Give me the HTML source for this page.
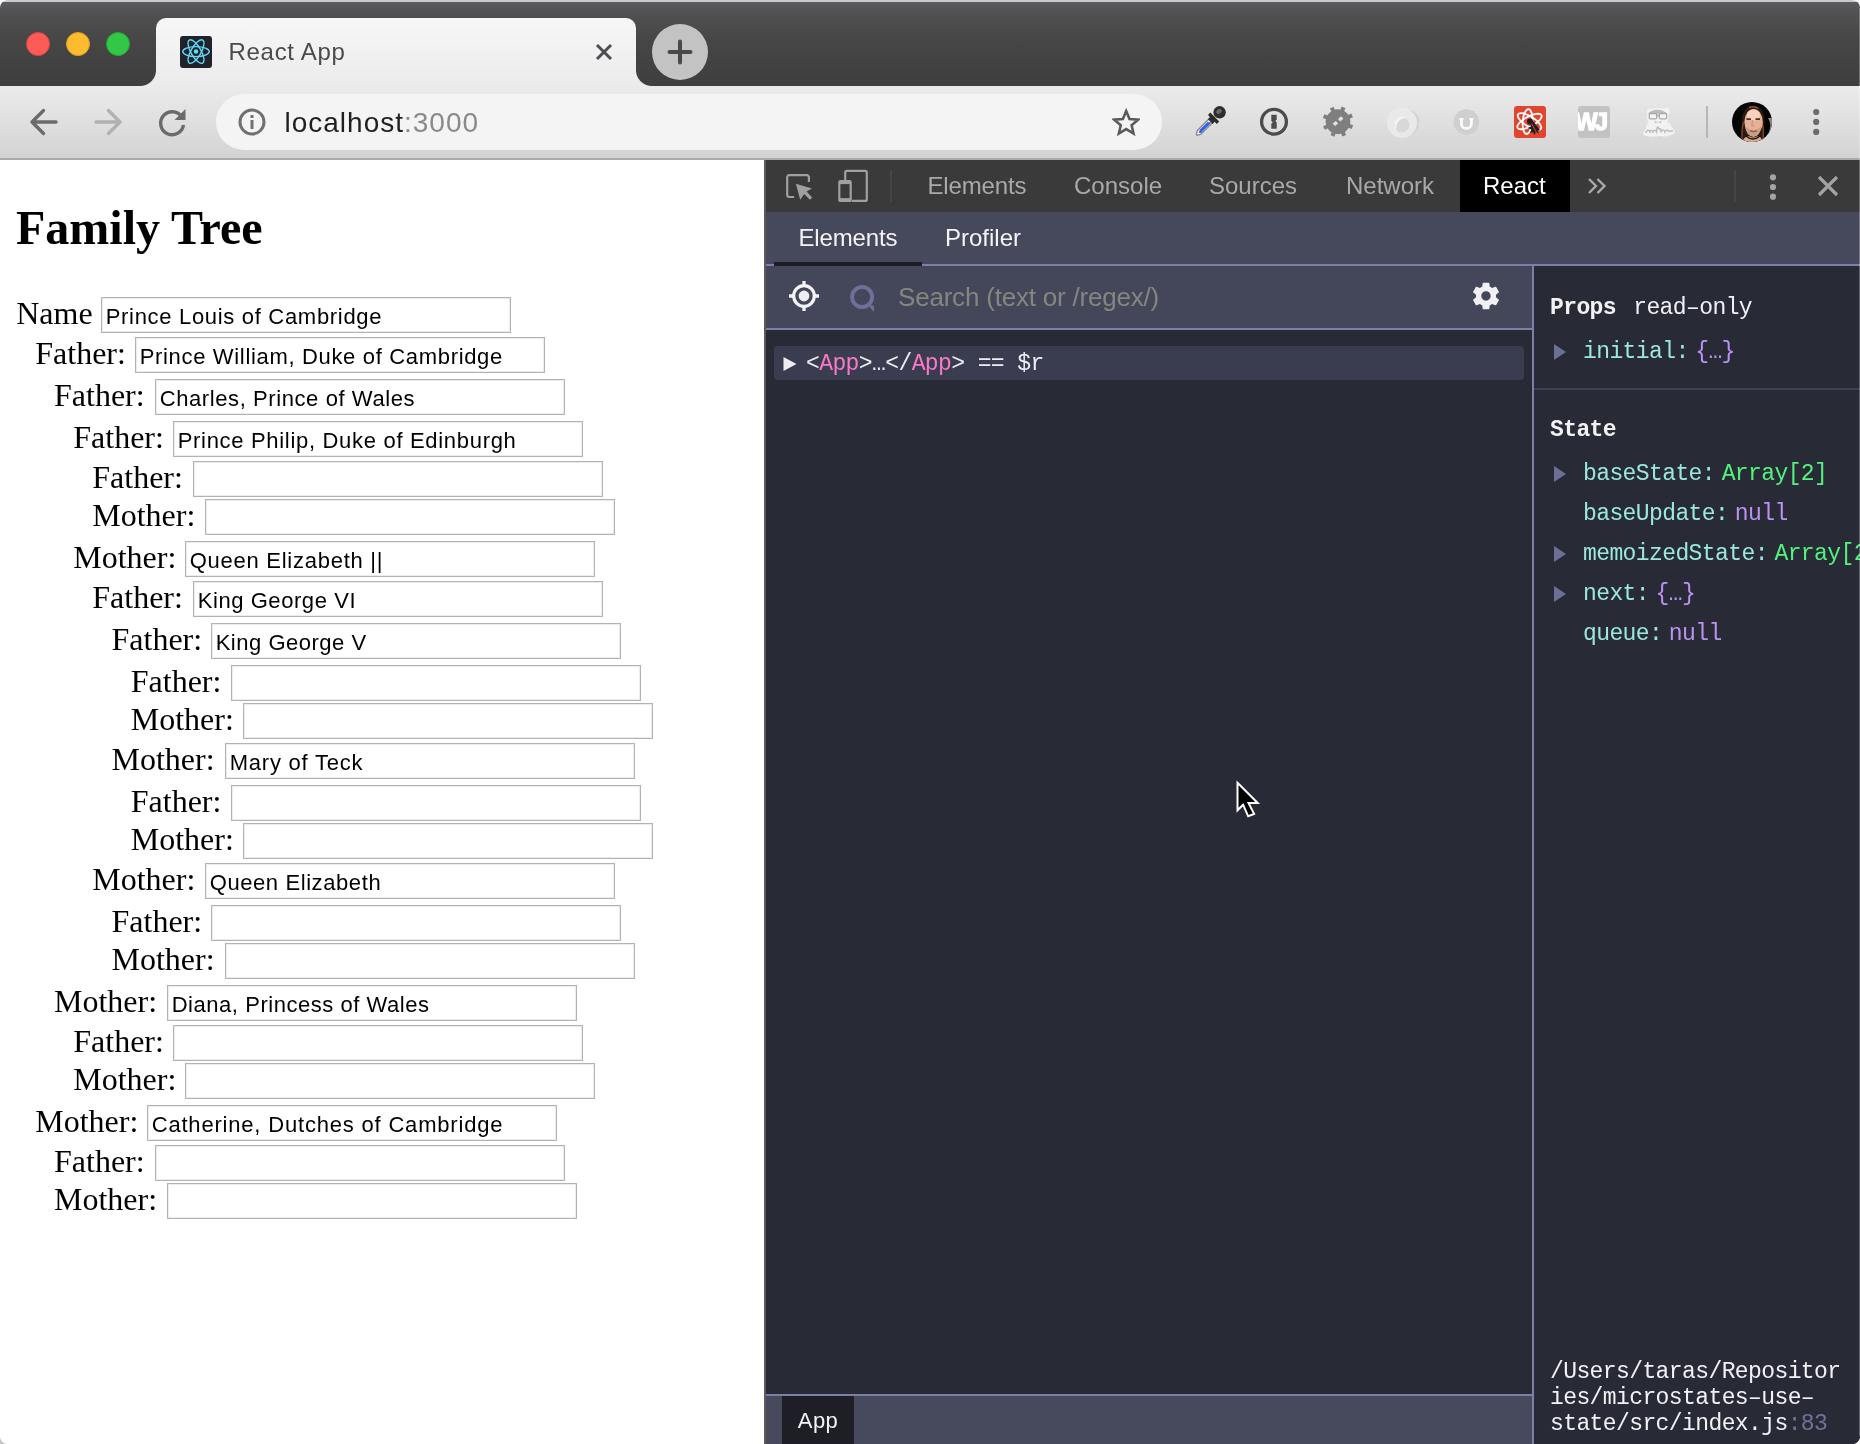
<!DOCTYPE html>
<html><head><meta charset="utf-8"><title>React App</title>
<style>
*{box-sizing:border-box;margin:0;padding:0}
html,body{width:1860px;height:1444px;overflow:hidden;background:#fff}
body{font-family:"Liberation Sans",sans-serif;position:relative}
#win{position:absolute;left:0;top:0;width:1860px;height:1444px;overflow:hidden;border-radius:8px;background:#fff;will-change:transform}
.abs{position:absolute}
/* ---------- title bar ---------- */
#tb{position:absolute;left:0;top:0;width:1860px;height:86px;background:linear-gradient(#c9c9c9 0,#c9c9c9 1.5px,#5b5b5e 2.5px,#515153 12px,#464646 40px,#3e3e3e 86px)}
.tl{position:absolute;top:32px;width:24px;height:24px;border-radius:50%}
#tab{position:absolute;left:156px;top:18px;width:480px;height:68px;border-radius:10px 10px 0 0;background:linear-gradient(#f7f7f7,#ebebeb)}
#tab:before,#tab:after{content:"";position:absolute;bottom:0;width:16px;height:16px}
#tab:before{left:-16px;background:radial-gradient(circle at 0 0,rgba(0,0,0,0) 15.5px,#ebebeb 16.5px)}
#tab:after{right:-16px;background:radial-gradient(circle at 100% 0,rgba(0,0,0,0) 15.5px,#ebebeb 16.5px)}
#tabtitle{position:absolute;left:72.5px;top:20px;font-size:24px;line-height:28px;color:#4a4a4a;letter-spacing:.7px;white-space:nowrap}
#newtab{position:absolute;left:652px;top:24px;width:56px;height:56px;border-radius:50%;background:#c3c3c3}
/* ---------- toolbar ---------- */
#bar{position:absolute;left:0;top:86px;width:1860px;height:74px;background:linear-gradient(#ebebeb 0,#e4e4e4 30%,#d6d6d6 85%,#d2d2d2 97%,#a9a9a9 98%,#a9a9a9 100%)}
#url{position:absolute;left:216px;top:8px;width:946px;height:56px;border-radius:28px;background:#f4f4f4}
#urltext{position:absolute;left:68.5px;top:11px;font-size:28px;line-height:36px;color:#1f1f1f;letter-spacing:1px;white-space:nowrap}
#urltext i{font-style:normal;color:#8a8a8a}
/* ---------- page ---------- */
#page{position:absolute;left:0;top:160px;width:764px;height:1284px;background:#fff;font-family:"Liberation Serif",serif;color:#000}
.h1{position:absolute;left:16px;top:40px;font-size:48px;font-weight:bold;line-height:56px;white-space:nowrap}
.lab{position:absolute;font-size:32px;line-height:40px;white-space:nowrap;margin-top:-160px}
.inp{position:absolute;width:410px;height:36px;border:1px solid #b3b3b3;box-shadow:inset 0 0 0 1px #ececec;background:#fff;margin-top:-160px;font-family:"Liberation Sans",sans-serif;font-size:22px;line-height:34px;white-space:nowrap;overflow:hidden}
.inp span{position:absolute;left:3.7px;top:2px;letter-spacing:.68px}
/* ---------- devtools ---------- */
#dev{position:absolute;left:764px;top:160px;width:1096px;height:1284px;background:#282a36;border-left:2px solid #5b5b5b}
#dtabs{position:absolute;left:0;top:0;width:1094px;height:52px;background:#3a3a3a;font-size:24px;color:#a9a9a9}
#dtabs span{position:absolute;top:12px;line-height:28px;white-space:nowrap}
#rtab{position:absolute;left:694px;top:0;width:110px;height:52px;background:#000}
#rbar{position:absolute;left:0;top:52px;width:1094px;height:54px;background:#46485b;border-bottom:2px solid #7c7fa9;font-size:24px;color:#f4f4f6}
#rbar span{position:absolute;top:12px;line-height:28px;white-space:nowrap}
#rsel{position:absolute;left:8px;top:50px;width:148px;height:4px;background:#1c1d26}
#sbar{position:absolute;left:0;top:106px;width:766px;height:64px;background:#44475a;border-bottom:2px solid #7c7fa9}
#sph{position:absolute;left:132px;top:16px;font-size:26px;line-height:30px;color:#85867f;white-space:nowrap;letter-spacing:-.2px}
#tree{position:absolute;left:0;top:170px;width:766px;height:1064px;background:#282a36}
#selrow{position:absolute;left:8px;top:16px;width:750px;height:34px;border-radius:4px;background:#3a3c50}
.mono{font-family:"Liberation Mono",monospace;font-size:23px;letter-spacing:-.6px;white-space:nowrap}
#rowtxt{position:absolute;left:32px;top:5px;line-height:26px;color:#eeeef2}
#rowtxt b{font-weight:normal;color:#f979c6}
#crumbs{position:absolute;left:0;top:1234px;width:766px;height:50px;background:#474a5c;border-top:2px solid #7c7fa9}
#chip{position:absolute;left:16px;top:0;width:72px;height:48px;background:#1d1e26;color:#f4f4f6;font-size:22px;line-height:50px;text-align:center;letter-spacing:.4px}
#side{position:absolute;left:766px;top:106px;width:328px;height:1178px;background:#282a36;border-left:2px solid #7c7fa9;color:#f2f2f5}
.sl{position:absolute;left:16px;line-height:26px}
.k{color:#9ae8de}.p{color:#bb92f2}.g{color:#52f47e}.c{color:#6f7396}
.tri{position:absolute;left:20px;width:0;height:0;border-left:12px solid #6c7096;border-top:8px solid transparent;border-bottom:8px solid transparent}
#sep{position:absolute;left:0;top:122px;width:326px;height:2px;background:#3f4152}
#redge{position:absolute;left:1859px;top:8px;width:1px;height:1428px;background:rgba(255,255,255,.28)}
#cbl{position:absolute;left:0;top:1434px;width:10px;height:10px;background:#c4c4c4}

</style></head>
<body>
<div id="cbl"></div>
<div id="win">
<div id="tb">
 <div class="tl" style="left:26px;background:#fc5b57;border:1px solid #df4640"></div>
 <div class="tl" style="left:66px;background:#fdbc2e;border:1px solid #de9f24"></div>
 <div class="tl" style="left:106px;background:#33c748;border:1px solid #24a834"></div>
 <div id="tab">
  <svg class="abs" style="left:24px;top:18px" width="32" height="32" viewBox="0 0 32 32">
   <rect width="32" height="32" rx="3" fill="#20232a"/>
   <g fill="none" stroke="#61dafb" stroke-width="1.350">
    <ellipse cx="16" cy="15.600" rx="13.300" ry="5"/>
    <ellipse cx="16" cy="15.600" rx="13.300" ry="5" transform="rotate(60 16 15.600)"/>
    <ellipse cx="16" cy="15.600" rx="13.300" ry="5" transform="rotate(120 16 15.600)"/>
   </g>
   <circle cx="16" cy="15.600" r="2.250" fill="#61dafb"/>
  </svg>
  <div id="tabtitle">React App</div>
  <svg class="abs" style="left:438px;top:24px" width="20" height="20" viewBox="0 0 20 20"><path d="M3 3 L17 17 M17 3 L3 17" stroke="#4b4e52" stroke-width="3" fill="none"/></svg>
 </div>
 <div id="newtab">
  <svg class="abs" style="left:14px;top:14px" width="28" height="28" viewBox="0 0 28 28"><path d="M14 3.5 V24.5 M3.5 14 H24.5" stroke="#4a4a4a" stroke-width="4" stroke-linecap="round" fill="none"/></svg>
 </div>
</div>
<div id="bar">
 <!-- back -->
 <svg class="abs" style="left:28px;top:20px" width="32" height="32" viewBox="0 0 32 32"><path d="M28 16 H5 M15.5 4.5 L4 16 L15.5 27.5" stroke="#6b6b6b" stroke-width="3.4" fill="none" stroke-linecap="round" stroke-linejoin="round"/></svg>
 <!-- forward -->
 <svg class="abs" style="left:92px;top:20px" width="32" height="32" viewBox="0 0 32 32"><path d="M4 16 H27 M16.5 4.5 L28 16 L16.5 27.5" stroke="#b1b1b1" stroke-width="3.4" fill="none" stroke-linecap="round" stroke-linejoin="round"/></svg>
 <!-- reload -->
 <svg class="abs" style="left:156px;top:20px" width="32" height="32" viewBox="0 0 32 32"><path d="M25.5 10.5 A11.5 11.5 0 1 0 27.5 19" stroke="#6b6b6b" stroke-width="3.4" fill="none"/><path d="M29.5 3 V14 H18.5 Z" fill="#6b6b6b"/></svg>
 <div id="url">
  <svg class="abs" style="left:22px;top:14px" width="28" height="28" viewBox="0 0 28 28"><circle cx="14" cy="14" r="12" fill="none" stroke="#707070" stroke-width="3"/><rect x="12.5" y="12" width="3" height="9" fill="#707070"/><rect x="12.5" y="7" width="3" height="3" fill="#707070"/></svg>
  <div id="urltext">localhost<i>:3000</i></div>
  <!-- star -->
  <svg class="abs" style="left:895.800px;top:14px" width="28.400" height="28.400" viewBox="0 0 30 30"><path d="M15 3.2 L18.5 11.6 L27.6 12.3 L20.7 18.2 L22.8 27 L15 22.3 L7.2 27 L9.3 18.2 L2.4 12.3 L11.5 11.6 Z" fill="none" stroke="#5a5a5a" stroke-width="2.700" stroke-linejoin="miter"/></svg>
 </div>
 <!-- eyedropper -->
 <svg class="abs" style="left:1194px;top:18px" width="34" height="34" viewBox="0 0 34 34">
  <path d="M2.200 30.300 L3.400 26.500 L17.800 12.100 L21.400 15.700 L7 30.100 L3.200 31.300 Z" fill="#f4f4f4" stroke="#8a8a8a" stroke-width="1.400" stroke-linejoin="round"/>
  <path d="M4.600 28.800 L6 25.600 L13.600 18 L17.400 18.600 L7 29 Z" fill="#2f63e6"/>
  <path d="M16.300 8.600 L25.200 17.500 L22.800 19.900 L20.700 17.800 L18.600 19.900 L14 15.300 L16.100 13.200 L14 11.100 Z" fill="#2b2b2b"/>
  <circle cx="25.600" cy="8.300" r="6.200" fill="#2e2e2e"/>
  <ellipse cx="25" cy="7.400" rx="3" ry="2.200" transform="rotate(-40 25 7.400)" fill="#6a6a6a"/>
 </svg>
 <!-- 1password -->
 <svg class="abs" style="left:1258px;top:20px" width="32" height="32" viewBox="0 0 32 32"><circle cx="16" cy="15.700" r="12.400" fill="none" stroke="#4c4c4c" stroke-width="3.300"/><path d="M13.300 8.700 H18.700 V13.700 L17.200 15 L18.700 16.300 V22.700 H13.300 V17.700 L14.800 16.400 L13.300 15.100 Z" fill="#4c4c4c"/></svg>
 <!-- bug gear -->
 <svg class="abs" style="left:1320px;top:18px" width="36" height="36" viewBox="0 0 36 36">
  <g transform="rotate(21 18 17.700)"><circle cx="18" cy="17.700" r="12.300" fill="#7f7f7f"/>
  <path d="M18 2.300 V33.100 M2.600 17.700 H33.400 M7.100 6.800 L28.900 28.600 M28.900 6.800 L7.100 28.600" stroke="#7f7f7f" stroke-width="4" fill="none"/></g>
  <path d="M12.700 19.600 L15.800 16.900 L18.100 19.400 L15 22.100 Z M18 14.900 L21.100 12.200 L23.400 14.700 L20.300 17.400 Z" fill="#e2e2e2"/>
 </svg>
 <!-- swirl -->
 <svg class="abs" style="left:1386px;top:20px" width="33" height="33" viewBox="0 0 33 33"><circle cx="16.300" cy="16.300" r="15.400" fill="#e9e9e9"/><path d="M24 4 A15.400 15.400 0 0 1 25 29 A13 13 0 0 0 24 4" fill="#d4d4d4"/><circle cx="15.800" cy="19" r="7.600" fill="#d8d8d8"/><path d="M8.500 19 A7.500 7.500 0 0 1 20 12 A10 10 0 0 0 10.500 25 A7.400 7.400 0 0 1 8.500 19" fill="#f4f4f4"/></svg>
 <!-- U -->
 <svg class="abs" style="left:1453px;top:23px" width="26" height="26" viewBox="0 0 26 26"><circle cx="13.400" cy="13" r="12.800" fill="#cfcfcf"/><path d="M8.400 9.300 V14.400 A5 5 0 0 0 18.400 14.400 V9.300" fill="none" stroke="#fbfbfb" stroke-width="2.800"/><path d="M6.200 9.800 H10.600 M16.200 9.800 H20.600" stroke="#fbfbfb" stroke-width="1.700"/></svg>
 <!-- react red -->
 <svg class="abs" style="left:1514px;top:20px" width="32" height="32" viewBox="0 0 32 32"><rect width="32" height="32" rx="3" fill="#e1452f"/>
  <g fill="none" stroke="#fff" stroke-width="1.800"><ellipse cx="15.500" cy="15.500" rx="13.500" ry="5" transform="rotate(-28 15.500 15.500)"/><ellipse cx="15.500" cy="15.500" rx="13.500" ry="5" transform="rotate(32 15.500 15.500)"/><ellipse cx="13.500" cy="15.500" rx="12.500" ry="4.800" transform="rotate(95 13.500 15.500)"/></g>
  <circle cx="16" cy="15.500" r="3" fill="#1d1d1d"/>
  <path d="M15.500 17 L19.500 15.500 L26 24 L23.500 25 L25 27.500 L21.800 26 L20.500 29 L19 26 L16 27 L17.500 23.500 L13.500 22 L17 20.500 Z" fill="#1d1d1d"/><path d="M17.500 17.500 L22.500 26.500" stroke="#e1452f" stroke-width="1"/></svg>
 <!-- WJ -->
 <div class="abs" style="left:1578px;top:20px;width:32px;height:32px;background:#c2c2c2;border-radius:3px;overflow:hidden"><div class="abs" style="left:-3px;top:2px;width:40px;color:#fff;font-weight:bold;font-size:24px;line-height:28px;letter-spacing:-2.800px;-webkit-text-stroke:1.300px #fff;white-space:nowrap">WJ</div></div>
 <!-- ember -->
 <svg class="abs" style="left:1641px;top:19px" width="36" height="34" viewBox="0 0 36 34">
  <path d="M6 5.500 Q7 2.500 10 4 Q16.500 1.800 23 4 Q27 0.500 28.500 5 Q29.500 8 27 10 Q28 14 26 17 Q30 18 30.500 22 Q34 24 33.500 28 Q28 32.500 18 31 Q8 33 2.500 30 Q1 26.500 5 24.500 Q4.500 20.500 7.500 17.500 Q5 13 6.500 9.500 Q5 8 6 5.500 Z" fill="#f2f2f2"/>
  <path d="M8 7.500 Q16.500 1.500 25 7.500 L26 9 L7 9 Z" fill="#bdbdbd"/>
  <g fill="#f4f4f4" stroke="#a9a9a9" stroke-width="1.300"><rect x="8.300" y="8.500" width="7.400" height="5.400" rx="1.500"/><rect x="18.300" y="8.500" width="7.400" height="5.400" rx="1.500"/></g>
  <path d="M15.700 10.500 H18.300" stroke="#a9a9a9" stroke-width="1.300"/>
  <path d="M13 15 Q17 19 21 15 L19.500 18.500 L17 17 L14.500 18.500 Z" fill="#c6c6c6"/>
  <path d="M4.500 28 Q7 23 9 27 Q10 23.500 12 27 Q13.500 23.500 15.500 27 Q16 19 18 24 Q21 23 19.500 27 Q23 23 24 27 Q26 23.500 28 26.500 L32 25.500" stroke="#bdbdbd" stroke-width="1.500" fill="none"/>
 </svg>
 <!-- separator -->
 <div class="abs" style="left:1706px;top:20px;width:2px;height:32px;background:#b7b7b7"></div>
 <!-- avatar -->
 <svg class="abs" style="left:1732px;top:16px" width="40" height="40" viewBox="0 0 40 40">
  <defs><clipPath id="avc"><circle cx="20" cy="20" r="20"/></clipPath></defs>
  <g clip-path="url(#avc)">
   <rect width="40" height="40" fill="#050505"/>
   <path d="M11 40 Q9 30 10.500 22 Q8 12 16 5 Q22 2 28 6 Q34 12 32 24 Q33 32 31 40 Z" fill="#2c190f"/>
   <path d="M10.500 40 Q9 28 11.500 20 M30.500 40 Q32.500 30 30 20" stroke="#7b4a2c" stroke-width="1.400" fill="none"/>
   <path d="M17 5.500 Q22 3.500 26.500 6.500" stroke="#8a5430" stroke-width="1.500" fill="none"/>
   <ellipse cx="21.600" cy="20" rx="9.200" ry="13" fill="#e6b096"/>
   <ellipse cx="21.500" cy="13" rx="6.500" ry="5.500" fill="#f7d2bf"/>
   <path d="M13 24 Q14 34 21.500 35 Q28.500 34 29.500 24 Q26 28 21.300 28 Q17 28 13 24 Z" fill="#c79f83"/>
   <path d="M14.500 17.200 H19 M23.500 17.200 H28" stroke="#4a3526" stroke-width="1.700"/>
   <path d="M18 28.700 Q21.500 30.500 25 28.700" stroke="#8a5d48" stroke-width="1.300" fill="none"/>
   <path d="M20.500 18 L19.800 24 H22.500" stroke="#c98f76" stroke-width="1" fill="none"/>
   <path d="M9 42 Q12 34 17 34 Q21 37 26 34 Q30 35 32 42 Z" fill="#d9a98b"/>
   <path d="M14 34 Q21 40 28 34" stroke="#1a1a1a" stroke-width="1.600" fill="none"/>
   <path d="M36 16 Q40 22 37 30 L40 30 L40 16 Z" fill="#8d8d8d"/>
  </g>
 </svg>
 <!-- menu -->
 <svg class="abs" style="left:1810px;top:20px" width="12" height="32" viewBox="0 0 12 32"><circle cx="6.200" cy="6" r="3.100" fill="#6c6c6c"/><circle cx="6.200" cy="15.900" r="3.100" fill="#6c6c6c"/><circle cx="6.200" cy="25.900" r="3.100" fill="#6c6c6c"/></svg>
</div>

<div id="page">
<div class="h1">Family Tree</div>
<div class="lab" style="left:16.25px;top:293px">Name</div><div class="inp" style="left:101.00px;top:297px"><span style="letter-spacing:0.69px">Prince Louis of Cambridge</span></div>
<div class="lab" style="left:35.25px;top:333px">Father:</div><div class="inp" style="left:135.00px;top:337px"><span style="letter-spacing:0.67px">Prince William, Duke of Cambridge</span></div>
<div class="lab" style="left:54.00px;top:375px">Father:</div><div class="inp" style="left:155.00px;top:379px"><span style="letter-spacing:0.59px">Charles, Prince of Wales</span></div>
<div class="lab" style="left:73.25px;top:417px">Father:</div><div class="inp" style="left:173.00px;top:421px"><span style="letter-spacing:0.69px">Prince Philip, Duke of Edinburgh</span></div>
<div class="lab" style="left:92.25px;top:457px">Father:</div><div class="inp" style="left:193.00px;top:461px"><span></span></div>
<div class="lab" style="left:92.25px;top:495px">Mother:</div><div class="inp" style="left:205.00px;top:499px"><span></span></div>
<div class="lab" style="left:73.25px;top:537px">Mother:</div><div class="inp" style="left:185.00px;top:541px"><span style="letter-spacing:0.74px">Queen Elizabeth ||</span></div>
<div class="lab" style="left:92.25px;top:577px">Father:</div><div class="inp" style="left:193.00px;top:581px"><span style="letter-spacing:0.57px">King George VI</span></div>
<div class="lab" style="left:111.50px;top:619px">Father:</div><div class="inp" style="left:211.00px;top:623px"><span style="letter-spacing:0.51px">King George V</span></div>
<div class="lab" style="left:130.75px;top:661px">Father:</div><div class="inp" style="left:231.00px;top:665px"><span></span></div>
<div class="lab" style="left:130.75px;top:699px">Mother:</div><div class="inp" style="left:243.00px;top:703px"><span></span></div>
<div class="lab" style="left:111.50px;top:739px">Mother:</div><div class="inp" style="left:225.00px;top:743px"><span style="letter-spacing:0.78px">Mary of Teck</span></div>
<div class="lab" style="left:130.75px;top:781px">Father:</div><div class="inp" style="left:231.00px;top:785px"><span></span></div>
<div class="lab" style="left:130.75px;top:819px">Mother:</div><div class="inp" style="left:243.00px;top:823px"><span></span></div>
<div class="lab" style="left:92.25px;top:859px">Mother:</div><div class="inp" style="left:205.00px;top:863px"><span style="letter-spacing:0.59px">Queen Elizabeth</span></div>
<div class="lab" style="left:111.50px;top:901px">Father:</div><div class="inp" style="left:211.00px;top:905px"><span></span></div>
<div class="lab" style="left:111.50px;top:939px">Mother:</div><div class="inp" style="left:225.00px;top:943px"><span></span></div>
<div class="lab" style="left:54.00px;top:981px">Mother:</div><div class="inp" style="left:167.00px;top:985px"><span style="letter-spacing:0.54px">Diana, Princess of Wales</span></div>
<div class="lab" style="left:73.25px;top:1021px">Father:</div><div class="inp" style="left:173.00px;top:1025px"><span></span></div>
<div class="lab" style="left:73.25px;top:1059px">Mother:</div><div class="inp" style="left:185.00px;top:1063px"><span></span></div>
<div class="lab" style="left:35.25px;top:1101px">Mother:</div><div class="inp" style="left:147.00px;top:1105px"><span style="letter-spacing:0.81px">Catherine, Dutches of Cambridge</span></div>
<div class="lab" style="left:54.00px;top:1141px">Father:</div><div class="inp" style="left:155.00px;top:1145px"><span></span></div>
<div class="lab" style="left:54.00px;top:1179px">Mother:</div><div class="inp" style="left:167.00px;top:1183px"><span></span></div>
</div>
<div id="dev">
 <div id="dtabs">
  <!-- inspect icon -->
  <svg class="abs" style="left:19px;top:14px" width="30" height="28" viewBox="0 0 30 28"><path d="M23.900 8 V3.100 A2 2 0 0 0 21.900 1.100 H4.200 A2 2 0 0 0 2.200 3.100 V21 A2 2 0 0 0 4.200 23 H9.100" fill="none" stroke="#a0a0a0" stroke-width="2.200"/><path d="M10.900 9.800 L27 14.400 L21.600 17.600 L27.200 23.400 L24.900 25.700 L19.200 19.900 L15.200 25.700 Z" fill="#a0a0a0"/></svg>
  <!-- device icon -->
  <svg class="abs" style="left:71px;top:9px" width="32" height="34" viewBox="0 0 32 34"><path d="M8.200 11 V3.400 A1.500 1.500 0 0 1 9.700 1.900 H28.300 A1.500 1.500 0 0 1 29.800 3.400 V30.400 A1.500 1.500 0 0 1 28.300 31.900 H14.800" fill="none" stroke="#a0a0a0" stroke-width="2.200"/><rect x="2.300" y="12" width="11.400" height="19.900" rx="1.500" fill="none" stroke="#a0a0a0" stroke-width="2.200"/><rect x="2.300" y="11.600" width="11.400" height="3.500" fill="#a0a0a0"/><rect x="2.300" y="29.100" width="11.400" height="3.200" fill="#a0a0a0"/></svg>
  <div class="abs" style="left:124px;top:10px;width:2px;height:32px;background:#464646"></div>
  <span style="left:161.5px;letter-spacing:-.15px">Elements</span>
  <span style="left:308px">Console</span>
  <span style="left:443px">Sources</span>
  <span style="left:580px">Network</span>
  <div id="rtab"><span style="left:23px;color:#fff">React</span></div>
  <svg class="abs" style="left:821px;top:17px" width="20" height="18" viewBox="0 0 20 18"><path d="M2 2 L9 9 L2 16 M10.500 2 L17.500 9 L10.500 16" fill="none" stroke="#a9a9a9" stroke-width="2.400"/></svg>
  <div class="abs" style="left:968px;top:10px;width:2px;height:32px;background:#464646"></div>
  <svg class="abs" style="left:1002px;top:12px" width="10" height="30" viewBox="0 0 10 30"><circle cx="5" cy="5.300" r="3.100" fill="#a3a3a3"/><circle cx="5" cy="15" r="3.100" fill="#a3a3a3"/><circle cx="5" cy="24.700" r="3.100" fill="#a3a3a3"/></svg>
  <svg class="abs" style="left:1051px;top:15px" width="22" height="22" viewBox="0 0 22 22"><path d="M2 2 L20 20 M20 2 L2 20" stroke="#a3a3a3" stroke-width="3.200" fill="none"/></svg>
 </div>
 <div id="rbar">
  <span style="left:32.5px;letter-spacing:-.15px">Elements</span>
  <span style="left:179px">Profiler</span>
  <div id="rsel"></div>
 </div>
 <div id="sbar">
  <!-- target -->
  <svg class="abs" style="left:22px;top:14px" width="32" height="32" viewBox="0 0 32 32"><circle cx="16" cy="16" r="10.300" fill="none" stroke="#f3f3f6" stroke-width="3.200"/><circle cx="16" cy="16" r="5.400" fill="#eeeef2"/><path d="M16 1 V6 M16 26 V31 M1 16 H6 M26 16 H31" stroke="#f3f3f6" stroke-width="3.300"/></svg>
  <!-- search -->
  <svg class="abs" style="left:82px;top:17px" width="30" height="32" viewBox="0 0 30 32"><circle cx="14.100" cy="14" r="10" fill="none" stroke="#6d7198" stroke-width="3.900"/><path d="M19.500 21.300 L25.950 22.900 L25.950 29.050 Z" fill="#6d7198"/></svg>
  <div id="sph">Search (text or /regex/)</div>
  <!-- gear -->
  <svg class="abs" style="left:704px;top:14px" width="32" height="32" viewBox="0 0 24 24"><path fill="#f1f1f4" d="M19.430 12.980c.040-.320.070-.640.070-.980s-.030-.660-.070-.980l2.110-1.650c.190-.150.240-.420.120-.640l-2-3.460c-.120-.220-.390-.300-.610-.220l-2.490 1c-.520-.400-1.080-.730-1.690-.980l-.380-2.650C14.460 2.180 14.250 2 14 2h-4c-.250 0-.460.180-.490.420l-.380 2.650c-.610.250-1.170.590-1.690.980l-2.490-1c-.230-.090-.490 0-.610.220l-2 3.460c-.130.220-.070.490.120.640l2.110 1.650c-.040.320-.070.650-.070.980s.030.660.070.980l-2.110 1.650c-.190.150-.240.420-.120.640l2 3.460c.120.220.390.300.610.220l2.490-1c.520.400 1.080.730 1.690.980l.380 2.650c.030.240.240.420.490.420h4c.250 0 .460-.180.490-.420l.380-2.650c.610-.250 1.170-.590 1.690-.980l2.490 1c.230.090.490 0 .610-.220l2-3.460c.120-.220.070-.490-.120-.640l-2.110-1.650zM12 15.500c-1.930 0-3.500-1.570-3.500-3.500s1.570-3.500 3.500-3.500 3.500 1.570 3.500 3.500-1.570 3.500-3.500 3.500z"/></svg>
 </div>
 <div id="tree">
  <div id="selrow">
   <svg class="abs" style="left:9px;top:10px" width="14" height="16" viewBox="0 0 14 16"><path d="M0.500 1 L13.500 8 L0.500 15 Z" fill="#eeeef2"/></svg>
   <div id="rowtxt" class="mono">&lt;<b>App</b>&gt;…&lt;/<b>App</b>&gt; == $r</div>
  </div>
 </div>
 <div id="crumbs"><div id="chip">App</div></div>
 <div id="side" class="mono">
  <div class="sl" style="top:29px"><b>Props</b> <span style="margin-left:4px">read–only</span></div>
  <div class="tri" style="top:78px"></div>
  <div class="sl" style="left:49px;top:73px"><span class="k">initial:</span><span class="p" style="margin-left:6.6px">{…}</span></div>
  <div id="sep"></div>
  <div class="sl" style="top:151px"><b>State</b></div>
  <div class="tri" style="top:200px"></div>
  <div class="sl" style="left:49px;top:195px"><span class="k">baseState:</span><span class="g" style="margin-left:6.6px">Array[2]</span></div>
  <div class="sl" style="left:49px;top:235px"><span class="k">baseUpdate:</span><span class="p" style="margin-left:6.6px">null</span></div>
  <div class="tri" style="top:280px"></div>
  <div class="sl" style="left:49px;top:275px"><span class="k">memoizedState:</span><span class="g" style="margin-left:6.6px">Array[2]</span></div>
  <div class="tri" style="top:320px"></div>
  <div class="sl" style="left:49px;top:315px"><span class="k">next:</span><span class="p" style="margin-left:6.6px">{…}</span></div>
  <div class="sl" style="left:49px;top:355px"><span class="k">queue:</span><span class="p" style="margin-left:6.6px">null</span></div>
  <div class="sl" style="top:1093px">/Users/taras/Repositor<br>ies/microstates–use–<br>state/src/index.js<span class="c">:83</span></div>
 </div>
 <svg class="abs" style="left:464px;top:615px" width="36" height="48" viewBox="1230 775 36 48"><path d="M1237.500 782.800 L1257.700 803 L1248.500 803 L1254.100 813.900 L1248.200 816.300 L1243.100 804.700 L1237.500 810.300 Z" fill="#000" stroke="#fff" stroke-width="2" stroke-linejoin="miter"/></svg>
</div>

<div id="redge"></div>
</div>
</body></html>
